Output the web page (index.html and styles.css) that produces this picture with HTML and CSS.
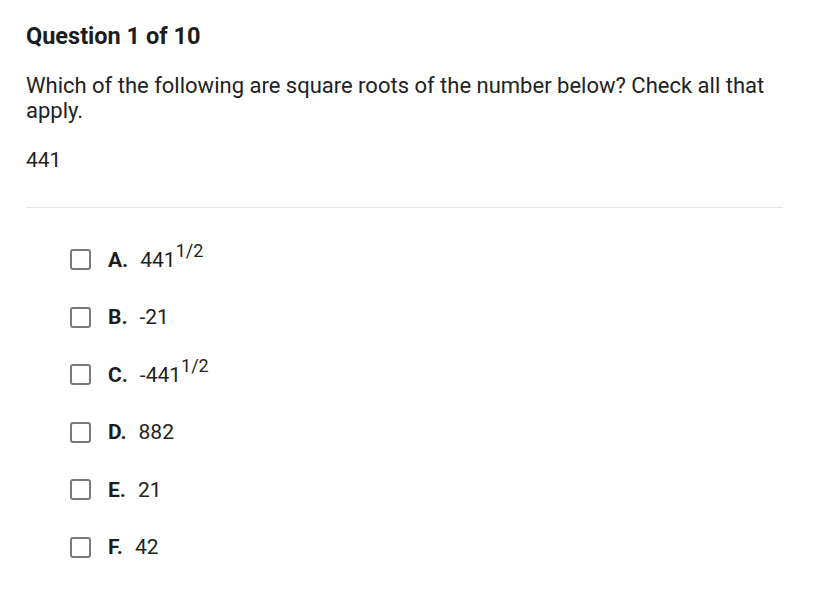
FILE: index.html
```html
<!DOCTYPE html>
<html>
<head>
<meta charset="utf-8">
<link rel="stylesheet" href="styles.css">
</head>
<body>
<div class="quiz">
  <h1 class="title">Question 1 of 10</h1>
  <p class="prompt">Which of the following are square roots of the number below? Check all that apply.</p>
  <p class="number">441</p>
  <hr class="divider">
  <ul class="options">
    <li class="option"><span class="box"></span><span class="letter">A.</span><span class="value">441<sup class="sup">1/2</sup></span></li>
    <li class="option"><span class="box"></span><span class="letter">B.</span><span class="value">-21</span></li>
    <li class="option"><span class="box"></span><span class="letter">C.</span><span class="value">-441<sup class="sup">1/2</sup></span></li>
    <li class="option"><span class="box"></span><span class="letter">D.</span><span class="value">882</span></li>
    <li class="option"><span class="box"></span><span class="letter">E.</span><span class="value">21</span></li>
    <li class="option"><span class="box"></span><span class="letter">F.</span><span class="value">42</span></li>
  </ul>
</div>
</body>
</html>
```
FILE: styles.css
```css
* { box-sizing: border-box; }
html, body {
  margin: 0;
  padding: 0;
  background: #ffffff;
}
body {
  font-family: Roboto, "Liberation Sans", Arial, sans-serif;
  color: #222222;
}
.quiz {
  width: 783px;
  padding: 22px 0 0 26px;
}
.title {
  margin: 0;
  font-size: 23.5px;
  line-height: 28px;
  font-weight: 700;
  color: #1c1c1c;
}
.prompt {
  margin: 23px 0 0 0;
  font-size: 22px;
  line-height: 25px;
  font-weight: 400;
}
.number {
  margin: 25px 0 0 0;
  font-size: 21px;
  line-height: 25px;
}
.divider {
  margin: 34px 0 0 0;
  border: 0;
  border-top: 1px solid #e2e2e2;
  height: 0;
}
.options {
  list-style: none;
  margin: 23px 0 0 0;
  padding: 0 0 0 44px;
}
.option {
  height: 57.5px;
  display: flex;
  align-items: center;
  font-size: 21px;
}
.box {
  width: 21px;
  height: 21px;
  border: 2px solid #7a7a7a;
  border-radius: 3px;
  flex: none;
  margin-right: 17px;
}
.letter {
  font-weight: 700;
  color: #1c1c1c;
  margin-right: 12px;
}
.sup {
  font-size: 18px;
  vertical-align: 10px;
  line-height: 0;
}
```
